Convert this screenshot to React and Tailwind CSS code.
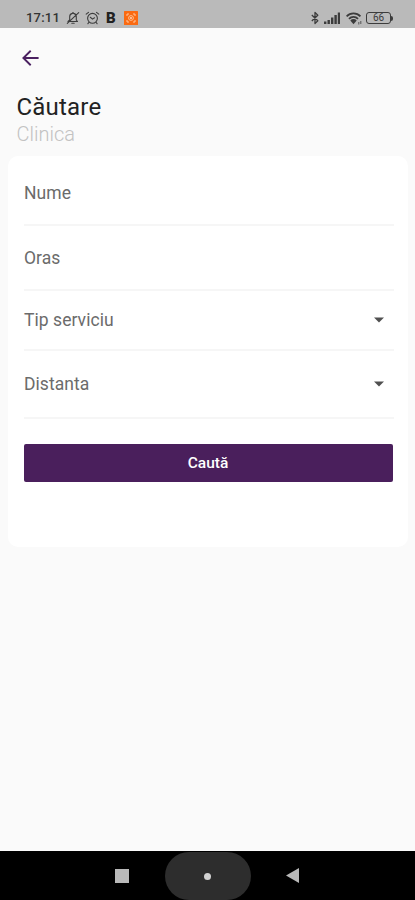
import { useState } from "react";

const StatusBar = () => (
  <div className="h-7 shrink-0 bg-[#bababa] flex items-center justify-between pl-[26px] pr-[22px] pt-[8px] text-[#3c3c3c]">
    <div className="flex items-center">
      <span className="w-[40px] text-[13px] leading-[20px] font-medium tracking-[0.2px] text-[#333333]">
        17:11
      </span>
      {/* Muted bell */}
      <svg width="14" height="14" viewBox="0 0 14 14" fill="none" stroke="currentColor" strokeWidth="1.1" strokeLinecap="round" strokeLinejoin="round">
        <path d="M2 10.5h9.5L10.3 9V5.7A3.3 3.3 0 0 0 7.6 2.4L7 1.5l-.6.9a3.3 3.3 0 0 0-2.7 3.3V9L2 10.5M5.8 12.3h2.4M12.7 1.7L1.3 12.3" />
      </svg>
      {/* Alarm clock */}
      <svg className="ml-[5px]" width="15" height="14" viewBox="0 0 15 14" fill="none" stroke="currentColor" strokeWidth="1.1" strokeLinecap="round">
        <circle cx="7.5" cy="7.3" r="4.9" />
        <path d="M1.2 3.2L3.5 1.3M13.8 3.2L11.5 1.3M5.3 6.3l2.2 1.8 2-1.3M3.8 11.5l-.9 1.2M11.2 11.5l.9 1.2" />
      </svg>
      <span className="ml-[6px] w-[18px] text-[15px] leading-[20px] font-black text-[#222222]">
        B
      </span>
      <svg width="14" height="14" viewBox="0 0 14 14" fill="none">
        <rect width="14" height="14" rx="0.5" fill="#fa6a12" />
        <path d="M3 5V3h2M9 3h2v2M11 9v2H9M5 11H3V9" stroke="#ffc59b" strokeWidth="1" />
        <circle cx="7" cy="7" r="2.4" stroke="#ffc59b" strokeWidth="0.9" />
        <circle cx="7" cy="7" r="0.9" fill="#ffe2cc" />
      </svg>
    </div>
    <div className="flex items-center">
      <svg width="8" height="14" viewBox="0 0 8 14" fill="none" stroke="currentColor" strokeWidth="1.3" strokeLinejoin="round">
        <path d="M.8 4l6 5.8L4 12.6V1.4l2.8 2.8-6 5.8" />
      </svg>
      <svg className="ml-[5px]" width="17" height="12" viewBox="0 0 17 12" fill="currentColor">
        <path d="M0 9.5h2.4V12H0zM3.5 8h2.4v4H3.5zM7 5.5h2.4V12H7zM10.4 3h2.4v9h-2.4zM13.8 .5h2.2V12h-2.2z" />
      </svg>
      <svg className="ml-[5px]" width="17" height="13" viewBox="0 0 17 13" fill="none" stroke="currentColor" strokeWidth="1.8">
        <path d="M.6 4.3a9.5 9.5 0 0 1 13.8 0M3 6.8a6.1 6.1 0 0 1 9 0" />
        <path d="M4.3 8.5a4.2 4.2 0 0 1 6.4 0L7.5 12.2z" fill="currentColor" stroke="none" />
        <path d="M12.8 10v2.5M14.8 9V12" strokeWidth="0.8" />
      </svg>
      <div className="ml-[3px] flex items-center">
        <div className="w-[25px] h-[12px] rounded-[3px] border-[1.5px] border-[#3c3c3c] flex items-center justify-center text-[10px] leading-none font-normal">
          66
        </div>
        <div className="w-[2px] h-[5px] rounded-r bg-[#3c3c3c]" />
      </div>
    </div>
  </div>
);

const Field = ({ label, className, select }) => (
  <div
    className={`flex items-center justify-between border-b-2 border-[#f6f6f6] pr-[10px] ${className}`}
  >
    <span className="text-[17.5px] leading-5 tracking-[0.05px] text-[#6b6b6b]">
      {label}
    </span>
    {select && (
      <svg width="10" height="6" viewBox="0 0 10 6">
        <path d="M0 .5h10L5 5.5z" fill="#505050" />
      </svg>
    )}
  </div>
);

const NavBar = () => (
  <div className="h-[49px] shrink-0 bg-black flex items-center pl-[115px]">
    <div className="w-[14px] h-[14px] bg-[#b9b9b9]" />
    <div className="ml-[35.5px] w-[86px] h-[48px] mt-px rounded-[24px] bg-[#2d2d2d] flex items-center justify-center">
      <div className="w-[7px] h-[7px] rounded-full bg-[#d2d2d2]" />
    </div>
    <svg className="ml-[35.5px]" width="13" height="15" viewBox="0 0 13 15">
      <path d="M13 0v15L0 7.5z" fill="#b9b9b9" />
    </svg>
  </div>
);

const App = () => {
  const [fields] = useState([
    { label: "Nume", className: "h-[65px]" },
    { label: "Oras", className: "h-[65px]" },
    { label: "Tip serviciu", className: "h-[60px]", select: true },
    { label: "Distanta", className: "h-[68px]", select: true },
  ]);

  return (
    <div className="h-[900px] w-full flex flex-col bg-[#fafafa] font-['Roboto',sans-serif]">
      <StatusBar />

      <main className="flex-1 px-2">
        <button type="button" className="block mt-[22px] ml-[14px]">
          <svg width="17" height="16" viewBox="0 0 17 16" fill="none" stroke="#4a2060" strokeWidth="1.9">
            <path d="M16.6 8H1.3M8.7 .8L1.4 8l7.3 7.2" />
          </svg>
        </button>

        <div className="mt-[27px] ml-[8.5px]">
          <h1 className="text-[24px] leading-[28px] tracking-[0.2px] text-[#222222]">
            Căutare
          </h1>
          <h2 className="pt-px text-[20px] leading-[24px] font-light text-[#c2c2c2]">
            Clinica
          </h2>
        </div>

        <div className="mt-[10px] mr-[-1px] h-[391px] rounded-[10px] bg-white pt-[5px] pl-4 pr-[14px]">
          {fields.map((field) => (
            <Field key={field.label} {...field} />
          ))}
          <button
            type="button"
            className="mt-[25px] block w-[369px] h-[38px] rounded-[2px] bg-[#4a1f5c] pt-px pr-px text-[15.5px] font-medium text-white"
          >
            Caută
          </button>
        </div>
      </main>

      <NavBar />
    </div>
  );
};

export default App;
